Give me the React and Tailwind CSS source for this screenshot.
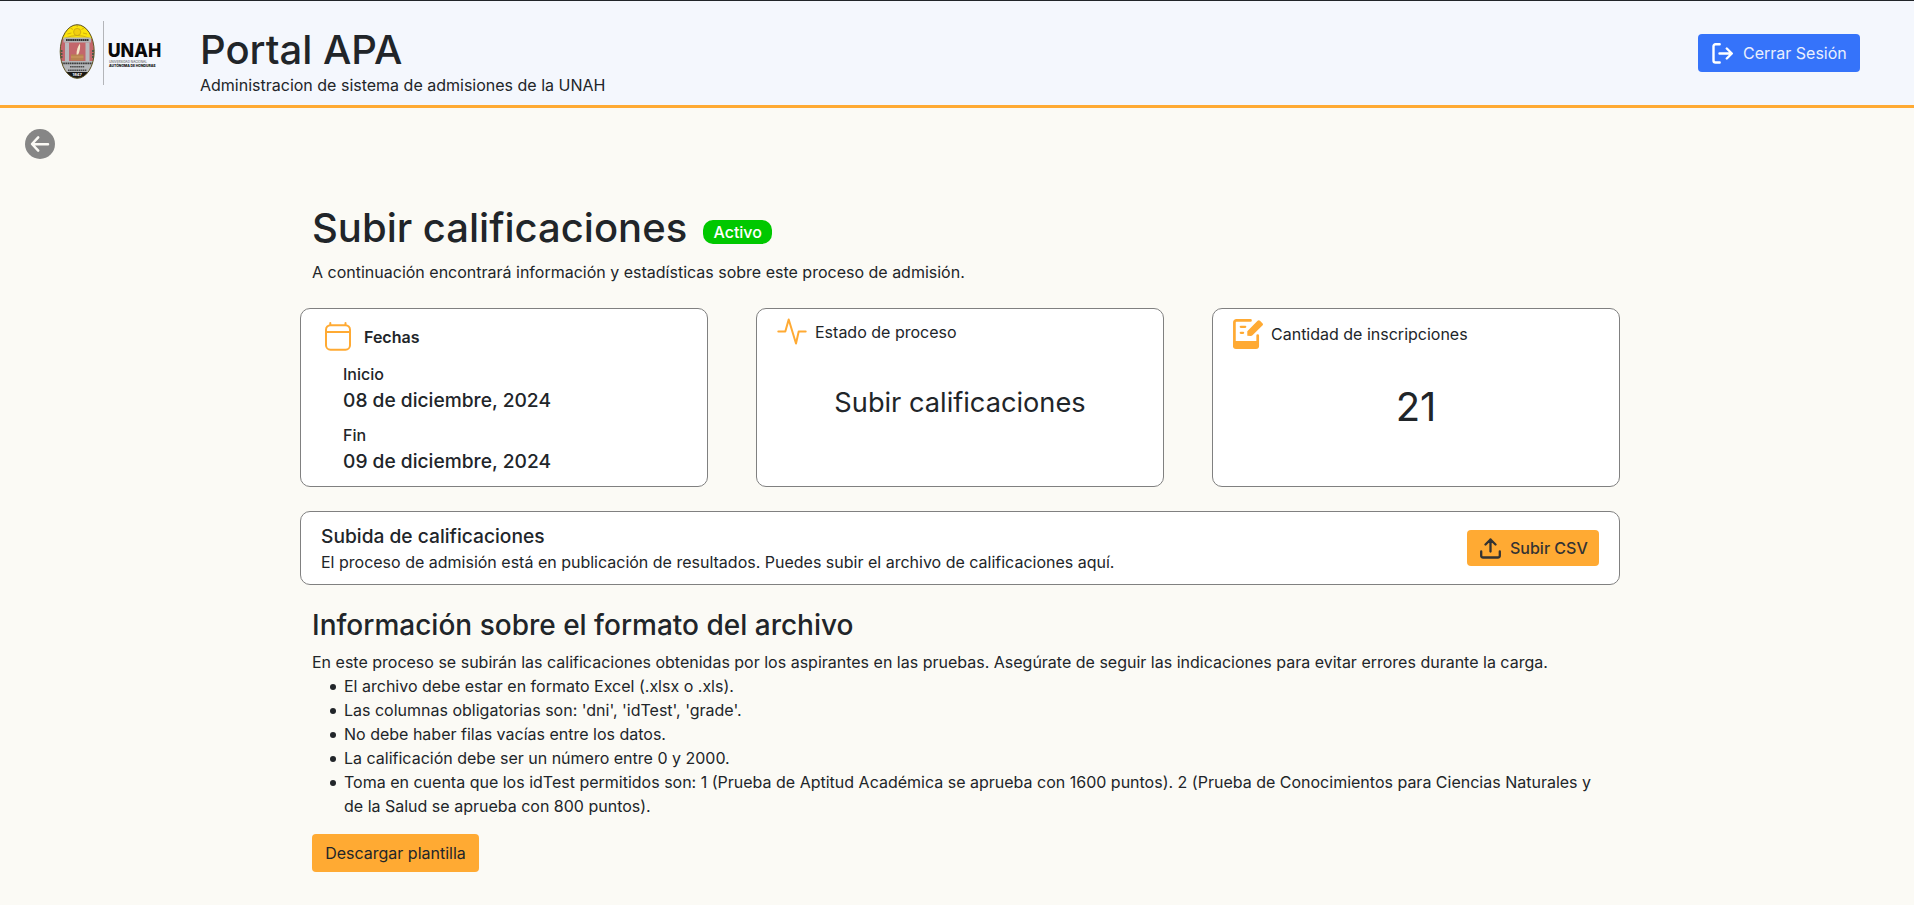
import React from "react";

function Seal() {
  return (
    <svg className="h-16 w-[110px]" viewBox="0 0 110 64" fill="none">
      <defs>
        <clipPath id="seal">
          <ellipse cx="18.2" cy="30.5" rx="17" ry="26.8" />
        </clipPath>
      </defs>
      <g clipPath="url(#seal)">
        <rect width="36" height="64" fill="#c3666b" />
        <rect width="36" height="18" fill="#fbe30b" />
        <circle cx="18.2" cy="11" r="3.6" fill="#f2cf10" stroke="#c9a512" strokeWidth=".8" />
        <path d="M18.2 4v2M11.400 7l2.500 1.500M25 7l-2.500 1.500M8.400 13l4-1M28 13l-4-1M6.400 17q11.800-5 23.600 0" stroke="#c9a512" strokeWidth=".8" />
        <rect x="4.500" y="16.500" width="27.500" height="5" fill="#b4b4b6" />
        <path d="M7 19h22.500" stroke="#333" strokeWidth="2" strokeDasharray="1.700 .4" />
        <path d="M2.500 29v9M34 29v9" stroke="#4c5b4c" strokeWidth="2" strokeDasharray="2 1" />
        <rect x="6" y="21.500" width="4" height="20" fill="#b9b9bd" />
        <rect x="26.500" y="21.500" width="4" height="20" fill="#b9b9bd" />
        <path d="M17.500 34q0-7 3.500-11.500q.8 6-2 11.500z" fill="#f6e6c8" />
        <rect x="12" y="33.500" width="12.500" height="6" fill="#b88350" />
        <path d="M12 36h12.500" stroke="#cf9a63" strokeWidth="1" />
        <rect y="40" width="36" height="12" fill="#b4b6b9" />
        <path d="M2 42.300h32" stroke="#3c3c3c" strokeWidth="1.700" strokeDasharray="1.700 .5" />
        <path d="M11 45.800h14.500M9 49.200h18.500" stroke="#4a4a4a" strokeWidth="1.400" strokeDasharray="1.600 .5" />
        <rect y="51" width="36" height="8" fill="#171717" />
        <text x="18.200" y="55.300" textAnchor="middle" fontSize="4" fontWeight="700" fontFamily="Inter, sans-serif" fill="#fff">1847</text>
      </g>
      <ellipse cx="18.200" cy="30.500" rx="17" ry="26.800" stroke="#5d5623" strokeWidth="1" />
      <path d="M44.500 0v64" stroke="#b3b5b9" strokeWidth="1" />
      <text x="48.700" y="35.600" textLength="53.500" lengthAdjust="spacingAndGlyphs" fontSize="18.500" fontWeight="800" fontFamily="Inter, sans-serif" fill="#080808">UNAH</text>
      <text x="50" y="41.800" textLength="38" lengthAdjust="spacingAndGlyphs" fontSize="3.600" fontFamily="Inter, sans-serif" fill="#444">UNIVERSIDAD NACIONAL</text>
      <text x="50" y="45.700" textLength="46.500" lengthAdjust="spacingAndGlyphs" fontSize="3.600" fontWeight="800" fontFamily="Inter, sans-serif" fill="#080808">AUTÓNOMA DE HONDURAS</text>
    </svg>
  );
}

function LogoutIcon() {
  return (
    <svg className="h-[21px] w-[21px]" viewBox="0 0 21 21" fill="none" stroke="#fff" strokeWidth="2.400" strokeLinecap="round" strokeLinejoin="round">
      <path d="M7.700 1.300H3.500A2 2 0 0 0 1.500 3.300v14.200a2 2 0 0 0 2 2h4.200" />
      <path d="M7.500 10.500h12M14.800 5.500l5 5l-5 5" />
    </svg>
  );
}

function BackIcon() {
  return (
    <svg className="h-[30px] w-[30px]" viewBox="0 0 30 30" fill="none">
      <circle cx="15" cy="15" r="15" fill="#868686" />
      <path d="M23 15.200H7.500M13.200 8.300L7 15l6.200 6.700" stroke="#fbfaf5" strokeWidth="2.500" strokeLinecap="round" strokeLinejoin="round" />
    </svg>
  );
}

function CalendarIcon() {
  return (
    <svg className="h-[29px] w-[26px]" viewBox="0 0 26 29" fill="none" stroke="#ffaa33" strokeWidth="2" strokeLinecap="round">
      <rect x="1" y="3.200" width="24" height="24.500" rx="4.500" />
      <path d="M1 10h24M5.300 1v2M20.500 1v2" />
    </svg>
  );
}

function PulseIcon() {
  return (
    <svg className="h-[27px] w-[30px]" viewBox="0 0 30 27" fill="none" stroke="#ffaa33" strokeWidth="2" strokeLinecap="round" strokeLinejoin="round">
      <path d="M1.300 13.500h7L11.700 1.500L19 25.500l2.700-12h7" />
    </svg>
  );
}

function FormIcon() {
  return (
    <svg className="h-[30px] w-[30px]" viewBox="0 0 30 30" fill="none">
      <path d="M17.500 1.400H3.400a2 2 0 0 0-2 2V27M24.700 16.500V27" stroke="#ffaa33" strokeWidth="2.700" strokeLinecap="round" />
      <path d="M0 22h26v5a3 3 0 0 1-3 3H3a3 3 0 0 1-3-3z" fill="#ffaa33" />
      <path d="M7.800 7.800h4.400M7.800 13.800h2.300" stroke="#ffaa33" strokeWidth="2.300" strokeLinecap="round" />
      <path d="M14.300 16.800v-4.500L24.600 1.800q1.200-1.200 2.400 0L29.400 4.200q1.200 1.200 0 2.400L19.500 16.200q-.8.800-1.700.8z" fill="#ffaa33" />
    </svg>
  );
}

function UploadIcon() {
  return (
    <svg className="h-[21px] w-[21px]" viewBox="0 0 21 21" fill="none" stroke="#333" strokeWidth="2.300" strokeLinecap="round" strokeLinejoin="round">
      <path d="M10.500 13.500V1.500M5.500 6.500l5-5l5 5M1.200 13.500v4a2 2 0 0 0 2 2h14.600a2 2 0 0 0 2-2v-4" />
    </svg>
  );
}

const rules = [
  "El archivo debe estar en formato Excel (.xlsx o .xls).",
  "Las columnas obligatorias son: 'dni', 'idTest', 'grade'.",
  "No debe haber filas vacías entre los datos.",
  "La calificación debe ser un número entre 0 y 2000.",
  "Toma en cuenta que los idTest permitidos son: 1 (Prueba de Aptitud Académica se aprueba con 1600 puntos). 2 (Prueba de Conocimientos para Ciencias Naturales y de la Salud se aprueba con 800 puntos).",
];

export default function App() {
  return (
    <div className="h-[905px] overflow-hidden border-t border-[#212529] bg-[#fbfaf5] font-['Inter',sans-serif] text-base text-[#212529]">
      <header className="flex h-[107px] items-start border-b-3 border-[#ffaa33] bg-[#f4f7fd] pr-[54px] pl-[59px]">
        <div className="mt-5">
          <Seal />
        </div>
        <div className="mt-[25px] ml-[31px] grow">
          <h1 className="text-[40px] leading-12 font-medium">Portal APA</h1>
          <p className="-mt-px">Administracion de sistema de admisiones de la UNAH</p>
        </div>
        <button className="mt-[33px] flex h-[38px] w-[162px] items-center gap-[10px] rounded-[4px] bg-[#3573fa] pl-[14px] text-[#e9effd]">
          <LogoutIcon />
          Cerrar Sesión
        </button>
      </header>

      <div className="h-24 pt-[21px] pl-[25px]">
        <BackIcon />
      </div>

      <main className="ml-[300px] w-[1320px]">
        <div className="flex items-center pl-3">
          <h1 className="text-[40px] leading-12 font-medium">Subir calificaciones</h1>
          <span className="mt-[7px] ml-4 flex h-6 w-[69px] items-center justify-center rounded-[10px] bg-[#00c800] font-medium text-white">Activo</span>
        </div>
        <p className="mt-2 pl-3">A continuación encontrará información y estadísticas sobre este proceso de admisión.</p>

        <div className="mt-6 grid h-[179px] grid-cols-3 gap-12">
          <section className="rounded-[10px] border border-[#808080] bg-white pt-[13px] pl-6">
            <div className="flex h-[29px] items-center gap-[13px] font-semibold">
              <CalendarIcon />
              Fechas
            </div>
            <div className="mt-[11px] ml-[18px] font-medium">
              <p>Inicio</p>
              <p className="mt-[2px] text-[19.2px] leading-6">08 de diciembre, 2024</p>
              <p className="mt-[11px]">Fin</p>
              <p className="mt-[2px] text-[19.2px] leading-6">09 de diciembre, 2024</p>
            </div>
          </section>
          <section className="rounded-[10px] border border-[#808080] bg-white pt-[9px]">
            <div className="flex h-[27px] items-center gap-2 pl-5">
              <PulseIcon />
              Estado de proceso
            </div>
            <p className="mt-[37px] text-center text-[27.2px] leading-[42px]">Subir calificaciones</p>
          </section>
          <section className="rounded-[10px] border border-[#808080] bg-white pt-[10px]">
            <div className="flex h-[30px] items-center gap-2 pl-5">
              <FormIcon />
              Cantidad de inscripciones
            </div>
            <p className="mt-7 text-center text-[40px] leading-[60px]">21</p>
          </section>
        </div>

        <section className="mt-6 flex h-[74px] items-center justify-between rounded-[10px] border border-[#808080] bg-white pr-5 pl-5">
          <div>
            <h5 className="text-[19.2px] leading-[28px] font-medium">Subida de calificaciones</h5>
            <p>El proceso de admisión está en publicación de resultados. Puedes subir el archivo de calificaciones aquí.</p>
          </div>
          <button className="flex h-9 w-[132px] items-center gap-[9px] rounded-[4px] bg-[#ffaa33] pl-[13px] font-medium text-[#333]">
            <UploadIcon />
            Subir CSV
          </button>
        </section>

        <div className="mt-[23px] pr-3 pl-3">
          <h2 className="text-[28px] leading-[34px] font-medium">Información sobre el formato del archivo</h2>
          <p className="mt-2">En este proceso se subirán las calificaciones obtenidas por los aspirantes en las pruebas. Asegúrate de seguir las indicaciones para evitar errores durante la carga.</p>
          <ul className="pl-[18px]">
            {rules.map((rule) => (
              <li key={rule} className="flex items-start gap-2">
                <span className="mt-[10px] h-[6px] w-[6px] shrink-0 rounded-full bg-[#212529]" />
                <span>{rule}</span>
              </li>
            ))}
          </ul>
          <button className="mt-4 h-[38px] w-[167px] rounded-[4px] bg-[#ffaa33]">Descargar plantilla</button>
        </div>
      </main>
    </div>
  );
}
